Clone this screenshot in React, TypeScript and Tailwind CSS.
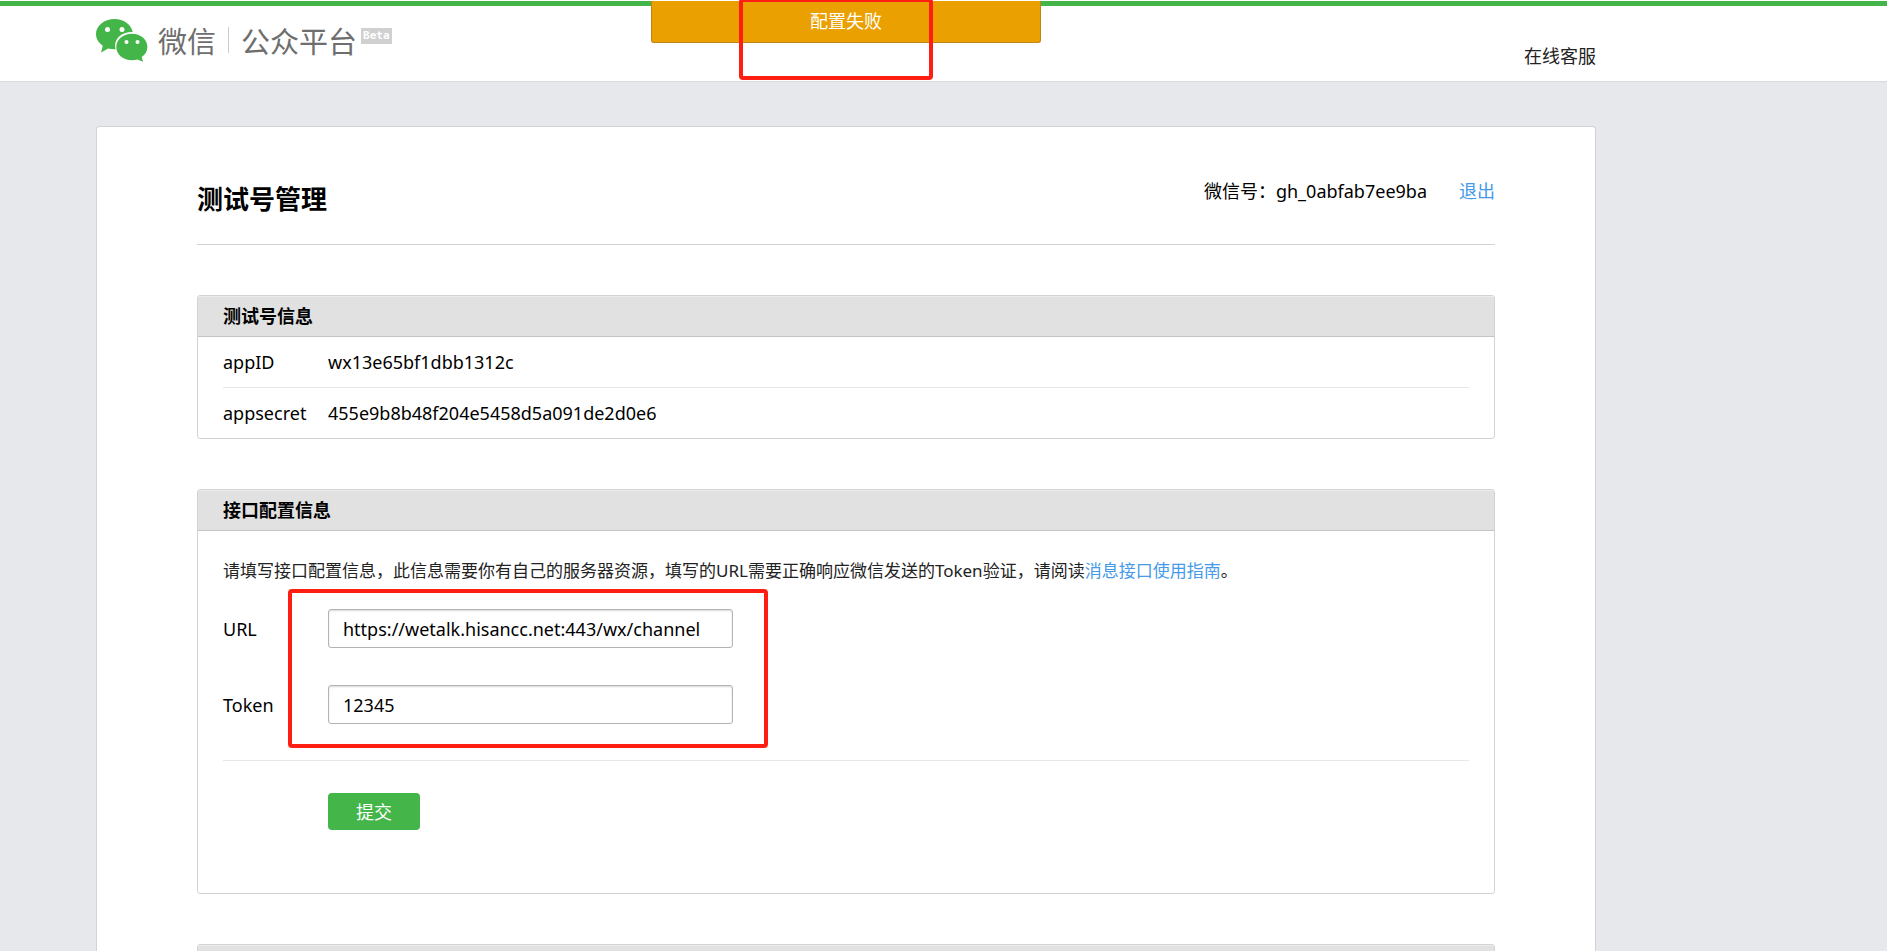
import React from "react";

function WeChatLogo() {
  return (
    <svg viewBox="0 0 52 44" className="h-11 w-[52px]" aria-hidden="true">
      <path
        fill="#44b549"
        d="M18.500 1C8.300 1 0 7.700 0 16.100c0 4.700 2.600 8.900 6.800 11.700L5 34.500l7.200-4c2 .5 4.100.8 6.300.8h1.200c-.4-1.200-.6-2.500-.6-3.800 0-7.900 7.500-13.600 16.800-13.600h.8C35.200 6.400 27.600 1 18.500 1z"
      />
      <path
        fill="#44b549"
        d="M36 15.800c-8.700 0-15.700 5.700-15.700 13.200S27.300 42.300 36 42.300c2 0 3.900-.3 5.600-.8l5.500 2.300-1.400-4.700c3.500-2.400 5.700-6 5.700-10.100 0-7.500-6.800-13.200-15.400-13.200z"
      />
      <circle cx="11.500" cy="11.500" r="2.500" fill="#fff" />
      <circle cx="26" cy="11.500" r="2.500" fill="#fff" />
      <circle cx="30.500" cy="24" r="2" fill="#fff" />
      <circle cx="41.500" cy="24" r="2" fill="#fff" />
    </svg>
  );
}

function Panel({ title, children }: { title?: string; children?: React.ReactNode }) {
  return (
    <section className="mt-[50px] overflow-hidden rounded-[3px] border border-[#d3d3d3]">
      <h3 className="h-[41px] border-b border-[#c4c4c4] bg-[#e1e1e1] px-[25px] text-lg/10 font-bold shadow-[inset_0_1px_0_#ececec]">
        {title}
      </h3>
      {children}
    </section>
  );
}

function Field({ id, label, value }: { id: string; label: string; value: string }) {
  return (
    <div className="flex items-center">
      <label htmlFor={id} className="w-[105px]">
        {label}
      </label>
      <input
        id={id}
        type="text"
        defaultValue={value}
        className="h-[39px] w-[405px] rounded-[3px] border border-[#b4b4b4] px-3.5 shadow-[inset_0_1px_2px_#d8d8d8] outline-none"
      />
    </div>
  );
}

const info = [
  ["appID", "wx13e65bf1dbb1312c"],
  ["appsecret", "455e9b8b48f204e5458d5a091de2d0e6"],
];

const instructions = [
  "请填写接口配置信息",
  "此信息需要你有自己的服务器资源",
  "填写的URL需要正确响应微信发送的Token验证",
  "请阅读",
].join("\uFF0C");

export default function App() {
  return (
    <div className="flex h-screen flex-col overflow-hidden bg-[#e7e8eb] pt-px font-['Noto_Sans','Noto_Sans_CJK_SC',sans-serif] text-lg/6 text-black shadow-[inset_0_1px_0_#fff]">
      <header className="shrink-0 border-t-[5px] border-b border-t-[#44b549] border-b-[#d9dadc] bg-white">
        <div className="relative flex h-[75px] max-w-[1692px] items-center justify-between px-24">
          <a
            href="#"
            className="-mt-2 flex items-center font-['Noto_Sans_CJK_SC',sans-serif] text-[29px]/10 font-normal text-[#6e6e6e]"
          >
            <WeChatLogo />
            <span className="ml-2.5">微信</span>
            <span className="mx-3 h-[26px] w-px bg-[#ccc]" />
            <span>公众平台</span>
            <span className="mb-2 ml-1 h-4 bg-[#d0d0d0] px-0.5 font-['DejaVu_Sans_Mono',monospace] text-[11px]/4 font-bold text-white">
              Beta
            </span>
          </a>
          <a href="#" className="mt-6 text-lg/6 text-[#222]">
            在线客服
          </a>
          <div className="absolute -top-[5px] left-1/2 w-[390px] -translate-x-1/2">
            <div
              role="alert"
              className="h-[42px] rounded-b-[3px] border border-t-0 border-[#bf8613] bg-[#eaa000] text-center text-lg/10 text-white"
            >
              配置失败
            </div>
            <div className="absolute -top-[3px] left-[88px] h-[82px] w-[194px] rounded-[4px] border-4 border-[#ff1f12]" />
          </div>
        </div>
      </header>

      <main className="mt-11 mr-[95px] ml-24 min-h-0 max-w-[1500px] flex-1 rounded-t-[4px] border border-b-0 border-[#d3d3d3] bg-white px-[100px]">
        <div className="flex h-[118px] items-center justify-between border-b border-[#d3d3d3] pt-[26px]">
          <h2 className="text-[26px]/9 font-bold">测试号管理</h2>
          <p className="-mt-4 flex">
            <span>{"微信号\uFF1A"}</span>
            <span>gh_0abfab7ee9ba</span>
            <a href="#" className="ml-8 text-[#459ae9]">
              退出
            </a>
          </p>
        </div>

        <Panel title="测试号信息">
          <dl className="mx-[25px] divide-y divide-[#e7e7eb]">
            {info.map(([name, value]) => (
              <div key={name} className="flex py-[13px]">
                <dt className="w-[105px]">{name}</dt>
                <dd>{value}</dd>
              </div>
            ))}
          </dl>
        </Panel>

        <Panel title="接口配置信息">
          <form className="px-[25px] pt-7 pb-[63px]" onSubmit={(e) => e.preventDefault()}>
            <p className="text-[17px]/6 text-[#222]">
              {instructions}
              <a href="#" className="text-[#459ae9]">
                消息接口使用指南
              </a>
              。
            </p>
            <div className="relative mt-[26px] flex flex-col gap-[37px]">
              <Field id="url" label="URL" value="https://wetalk.hisancc.net:443/wx/channel" />
              <Field id="token" label="Token" value="12345" />
              <div className="pointer-events-none absolute -top-5 left-[65px] h-[159px] w-[480px] rounded-[4px] border-4 border-[#ff1f12]" />
            </div>
            <div className="mt-9 border-t border-[#e7e7eb] pt-8 pl-[105px]">
              <button type="submit" className="h-[37px] w-[92px] rounded-[4px] bg-[#44b549] text-white">
                提交
              </button>
            </div>
          </form>
        </Panel>

        <Panel />
      </main>
    </div>
  );
}
